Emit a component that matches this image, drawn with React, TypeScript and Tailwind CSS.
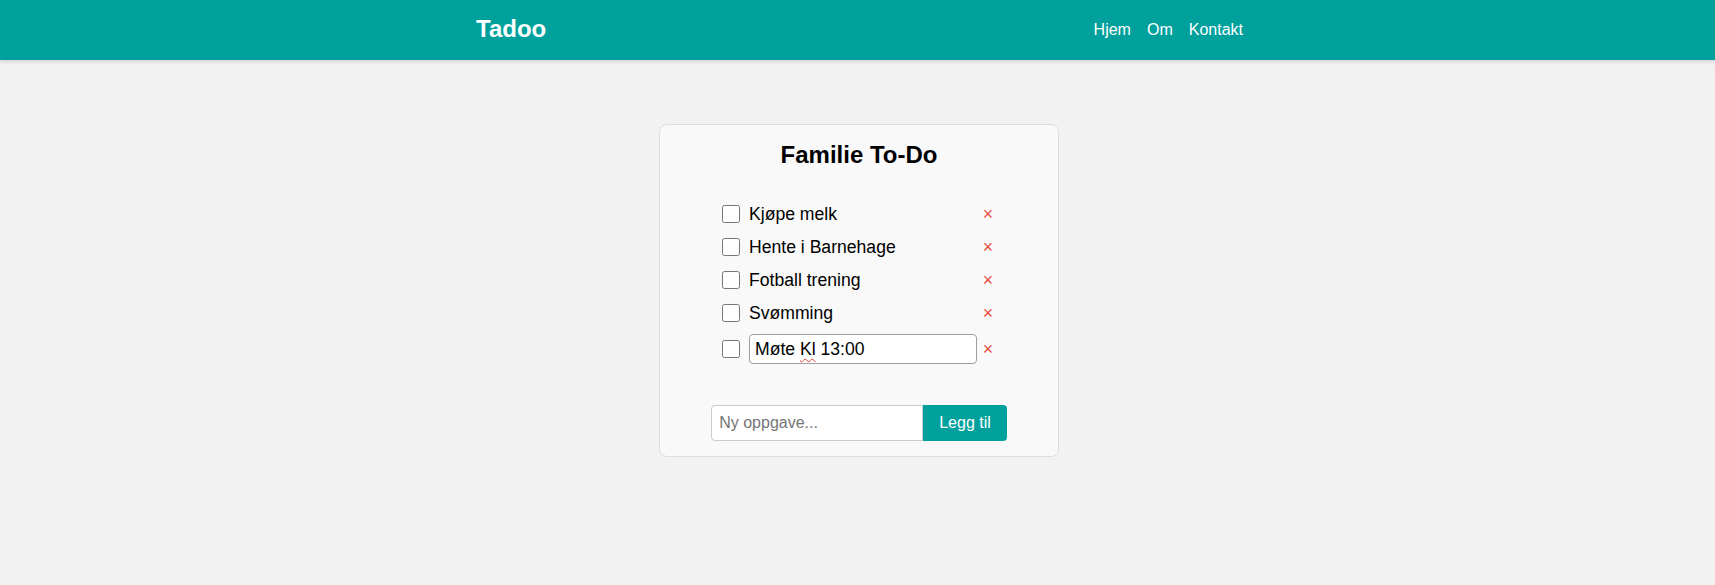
import { useState } from 'react';

interface Task {
  id: number;
  text: string;
  done: boolean;
  editing?: boolean;
}

const initialTasks: Task[] = [
  { id: 1, text: 'Kjøpe melk', done: false },
  { id: 2, text: 'Hente i Barnehage', done: false },
  { id: 3, text: 'Fotball trening', done: false },
  { id: 4, text: 'Svømming', done: false },
  { id: 5, text: 'Møte Kl 13:00', done: false, editing: true },
];

function Header() {
  return (
    <header className="h-[60px] bg-[#00a19d] shadow-[0_2px_4px_rgba(0,0,0,0.12)] pl-[3px]">
      <div className="mx-auto flex h-full max-w-[800px] items-center justify-between px-4">
        <h1 className="pb-[3px] pl-[1px] text-[24px] font-bold leading-[24px] text-white">Tadoo</h1>
        <nav className="flex gap-4 text-[16px] leading-[18px] text-white">
          <a href="#">Hjem</a>
          <a href="#">Om</a>
          <a href="#">Kontakt</a>
        </nav>
      </div>
    </header>
  );
}

function TaskRow({ task, onToggle, onDelete }: {
  task: Task;
  onToggle: (id: number) => void;
  onDelete: (id: number) => void;
}) {
  return (
    <li className="flex items-center py-[4.5px]">
      <input
        type="checkbox"
        checked={task.done}
        onChange={() => onToggle(task.id)}
        className="my-[3px] ml-[3px] mr-[8px] h-[18px] w-[18px] shrink-0"
      />
      {task.editing ? (
        <div className="ml-[1px] h-[30px] flex-1 rounded-[4px] border border-[#9e9e9e] bg-white px-[5px] leading-[28px]">
          <span>
            Møte <span className="underline decoration-[#e53935] decoration-wavy decoration-1 underline-offset-[3px]">Kl</span> 13:00
          </span>
        </div>
      ) : (
        <span className={`ml-[1px] flex-1 leading-[20px] ${task.done ? 'line-through text-gray-500' : ''}`}>{task.text}</span>
      )}
      <button
        onClick={() => onDelete(task.id)}
        className="px-[6px] leading-[20px] text-[#e74c3c]"
      >
        ×
      </button>
    </li>
  );
}

export default function App() {
  const [tasks, setTasks] = useState<Task[]>(initialTasks);
  const [draft, setDraft] = useState('');

  const toggle = (id: number) =>
    setTasks(tasks.map((t) => (t.id === id ? { ...t, done: !t.done } : t)));
  const remove = (id: number) => setTasks(tasks.filter((t) => t.id !== id));
  const add = () => {
    if (!draft.trim()) return;
    setTasks([...tasks, { id: Date.now(), text: draft.trim(), done: false }]);
    setDraft('');
  };

  return (
    <div className="min-h-screen bg-[#f2f2f2] font-['Liberation_Sans',Arial,sans-serif] text-black">
      <Header />
      <main className="pl-[3px] pt-[64px]">
        <div className="mx-auto w-[400px] rounded-[8px] border border-[#dddddd] bg-[#f9f9f9] px-4 pb-[15px] pt-[16px]">
          <h2 className="text-center text-[24px] font-bold leading-[28px]">Familie To-Do</h2>

          <ul className="mx-auto mt-[28px] w-[280px] text-[17.6px]">
            {tasks.map((task) => (
              <TaskRow key={task.id} task={task} onToggle={toggle} onDelete={remove} />
            ))}
          </ul>

          <form
            className="mt-[37px] flex justify-center"
            onSubmit={(e) => { e.preventDefault(); add(); }}
          >
            <input
              value={draft}
              onChange={(e) => setDraft(e.target.value)}
              placeholder="Ny oppgave..."
              className="h-[36px] w-[212px] rounded-l-[4px] border border-[#cccccc] bg-white px-[7px] text-[16px] placeholder:text-[#757575] focus:outline-none"
            />
            <button
              type="submit"
              className="h-[36px] rounded-r-[4px] bg-[#00a19d] px-4 text-[16px] text-white"
            >
              Legg til
            </button>
          </form>
        </div>
      </main>
    </div>
  );
}
